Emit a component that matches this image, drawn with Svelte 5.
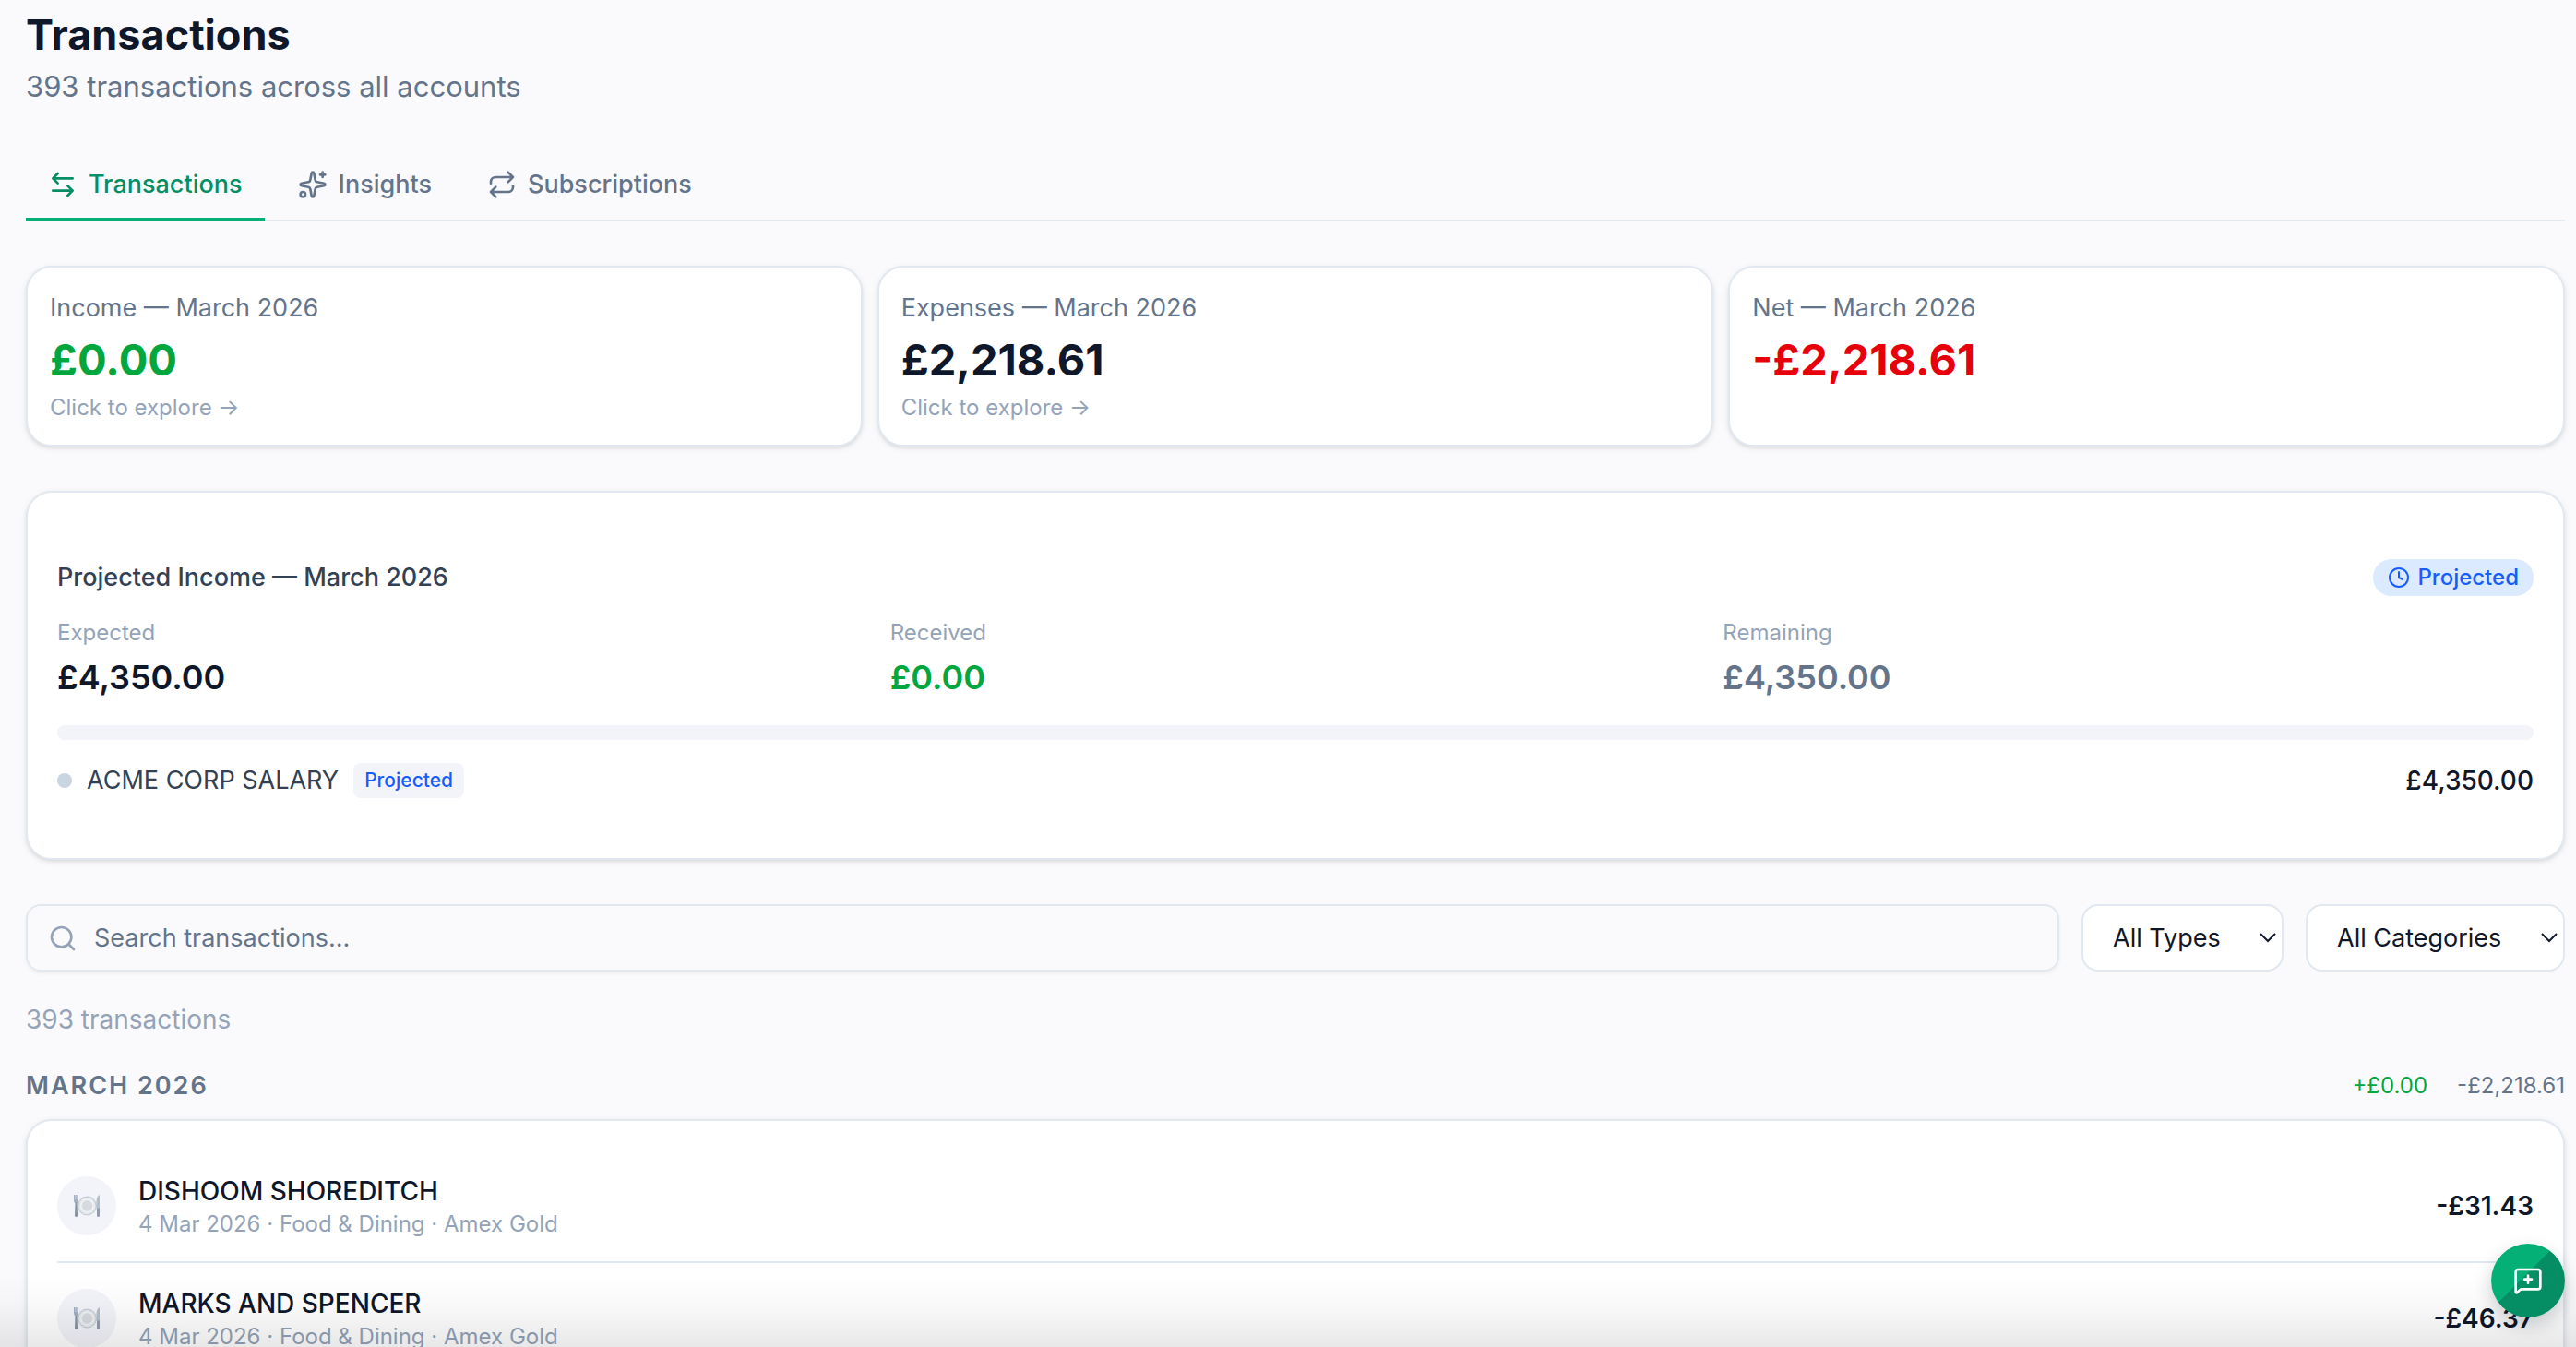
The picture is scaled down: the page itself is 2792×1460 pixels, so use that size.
<script lang="ts">
  type Tab = { id: string; label: string }
  type Summary = { label: string; value: string; tone: string; explore: boolean }

  const tabs: Tab[] = [
    { id: 'transactions', label: 'Transactions' },
    { id: 'insights', label: 'Insights' },
    { id: 'subscriptions', label: 'Subscriptions' }
  ]

  const summaries: Summary[] = [
    { label: 'Income — March 2026', value: '£0.00', tone: 'positive', explore: true },
    { label: 'Expenses — March 2026', value: '£2,218.61', tone: 'strong', explore: true },
    { label: 'Net — March 2026', value: '-£2,218.61', tone: 'negative', explore: false }
  ]

  const projection = [
    { label: 'Expected', value: '£4,350.00', tone: 'strong' },
    { label: 'Received', value: '£0.00', tone: 'positive' },
    { label: 'Remaining', value: '£4,350.00', tone: 'muted' }
  ]

  const transactions = [
    { name: 'DISHOOM SHOREDITCH', meta: '4 Mar 2026 · Food & Dining · Amex Gold', amount: '-£31.43' },
    { name: 'MARKS AND SPENCER', meta: '4 Mar 2026 · Food & Dining · Amex Gold', amount: '-£46.37' }
  ]

  let activeTab = $state('transactions')
  let search = $state('')
  let type = $state('all')
  let category = $state('all')
</script>

{#snippet chevron()}
  <svg class="chevron" viewBox="0 0 20 12" aria-hidden="true"><path d="m2 2 8 8 8-8" /></svg>
{/snippet}

<main class="page">
  <header>
    <h1>Transactions</h1>
    <p class="subtitle">393 transactions across all accounts</p>
  </header>

  <nav class="tabs" aria-label="Views">
    {#each tabs as tab}
      <button class="tab" class:active={activeTab === tab.id} onclick={() => (activeTab = tab.id)}>
        <svg class="icon" viewBox="0 0 24 24" aria-hidden="true">
          {#if tab.id === 'transactions'}
            <path d="M8 3 4 7l4 4M4 7h16M16 21l4-4-4-4M20 17H4" />
          {:else if tab.id === 'insights'}
            <path d="M11.017 2.814a1 1 0 0 1 1.966 0l1.051 5.558a2 2 0 0 0 1.594 1.594l5.558 1.051a1 1 0 0 1 0 1.966l-5.558 1.051a2 2 0 0 0-1.594 1.594l-1.051 5.558a1 1 0 0 1-1.966 0l-1.051-5.558a2 2 0 0 0-1.594-1.594l-5.558-1.051a1 1 0 0 1 0-1.966l5.558-1.051a2 2 0 0 0 1.594-1.594zM20 2v4M22 4h-4" />
            <circle cx="4" cy="20" r="2" />
          {:else}
            <path d="m17 2 4 4-4 4M3 11v-1a4 4 0 0 1 4-4h14M7 22l-4-4 4-4M21 13v1a4 4 0 0 1-4 4H3" />
          {/if}
        </svg>
        {tab.label}
      </button>
    {/each}
  </nav>

  <section class="summaries" aria-label="Summary">
    {#each summaries as item}
      <svelte:element this={item.explore ? 'button' : 'div'} class="card summary">
        <span class="summary-label">{item.label}</span>
        <span class="summary-value {item.tone}">{item.value}</span>
        {#if item.explore}
          <span class="explore">Click to explore →</span>
        {/if}
      </svelte:element>
    {/each}
  </section>

  <section class="card projected">
    <div class="projected-header">
      <h2>Projected Income — March 2026</h2>
      <span class="badge">
        <svg class="icon small" viewBox="0 0 24 24" aria-hidden="true">
          <circle cx="12" cy="12" r="10" />
          <path d="M12 6v6l4 2" />
        </svg>
        Projected
      </span>
    </div>

    <dl class="stats">
      {#each projection as stat}
        <div>
          <dt>{stat.label}</dt>
          <dd class={stat.tone}>{stat.value}</dd>
        </div>
      {/each}
    </dl>

    <div class="track"></div>

    <div class="source">
      <span class="dot"></span>
      <span class="source-name">ACME CORP SALARY</span>
      <span class="chip">Projected</span>
      <span class="source-amount">£4,350.00</span>
    </div>
  </section>

  <div class="filters">
    <label class="search">
      <svg class="icon" viewBox="0 0 24 24" aria-hidden="true">
        <circle cx="11" cy="11" r="8" />
        <path d="m21 21-4.3-4.3" />
      </svg>
      <input type="text" placeholder="Search transactions..." aria-label="Search transactions" bind:value={search} />
    </label>
    <div class="select">
      <select aria-label="Type" bind:value={type}>
        <option value="all">All Types</option>
      </select>
      {@render chevron()}
    </div>
    <div class="select">
      <select aria-label="Category" bind:value={category}>
        <option value="all">All Categories</option>
      </select>
      {@render chevron()}
    </div>
  </div>

  <p class="count">393 transactions</p>

  <section>
    <div class="month">
      <h3>March 2026</h3>
      <span class="month-in">+£0.00</span>
      <span class="month-out">-£2,218.61</span>
    </div>

    <ul class="card list">
      {#each transactions as tx}
        <li>
          <span class="avatar">
            <svg viewBox="0 0 28 24" aria-hidden="true">
              <circle cx="14.5" cy="12" r="9.8" fill="#e6eaee" stroke="#c3cbd5" stroke-width="1.2" />
              <circle cx="14.5" cy="12" r="6.6" fill="#d6dbe0" stroke="#f4f6f8" stroke-width="1.2" />
              <path d="M0 0h5v6.500q0 2-1.500 2.500h-2Q0 8.500 0 6.500z" fill="#a3afbf" />
              <path d="M1.700 0v5M3.300 0v5" stroke="#dde3ea" stroke-width=".6" />
              <path d="M1.500 8.500h2l.5 14q0 1.500-1.500 1.500T1 22.500z" fill="#8593a8" />
              <path d="M28 0q-3.500 1.500-3.500 8v7H28z" fill="#b4bfcb" />
              <path d="M25 14.500h3v8q0 1.500-1.500 1.500T25 22.500z" fill="#8f9db0" />
            </svg>
          </span>
          <div class="tx-text">
            <p class="tx-name">{tx.name}</p>
            <p class="tx-meta">{tx.meta}</p>
          </div>
          <span class="tx-amount">{tx.amount}</span>
        </li>
      {/each}
    </ul>
  </section>
</main>

<div class="fade"></div>

<button class="fab" aria-label="Send feedback">
  <svg class="icon" viewBox="0 0 24 24" aria-hidden="true">
    <path d="M22 17a2 2 0 0 1-2 2H6.828a2 2 0 0 0-1.414.586l-2.202 2.202A.71.71 0 0 1 2 21.286V5a2 2 0 0 1 2-2h16a2 2 0 0 1 2 2zM12 8v6M9 11h6" />
  </svg>
</button>

<style>
  :global(body) {
    background: #fafafc;
    overflow: hidden;
  }

  .page,
  button,
  input,
  select {
    font-family: Inter, 'Liberation Sans', sans-serif;
  }

  .page {
    padding: 6px 12px 0 28px;
    height: 100vh;
    box-sizing: border-box;
    overflow: hidden;
    color: #0f172a;
    font-size: 28px;
    line-height: 40px;
  }

  h1,
  h2,
  h3,
  p,
  dl,
  dd,
  ul {
    margin: 0;
    padding: 0;
  }

  h1 {
    font-size: 45px;
    font-weight: 700;
    line-height: 64px;
  }

  .subtitle {
    color: #64748b;
    font-size: 31px;
    line-height: 48px;
  }

  .icon {
    flex: none;
    width: 32px;
    height: 32px;
    fill: none;
    stroke: currentColor;
    stroke-width: 2;
    stroke-linecap: round;
    stroke-linejoin: round;
  }

  .small {
    width: 24px;
    height: 24px;
  }

  .tabs {
    display: flex;
    gap: 12px;
    margin-top: 42px;
    box-shadow: inset 0 -2px #e2e8f0;
  }

  .tab {
    display: flex;
    align-items: center;
    gap: 12px;
    padding: 24px 24px 20px;
    border: 0;
    border-bottom: 4px solid transparent;
    background: none;
    color: #64748b;
    font-size: 27px;
    font-weight: 500;
    line-height: 32px;
  }

  .tab.active {
    border-color: #05b076;
    color: #058d63;
  }

  .card {
    box-sizing: border-box;
    border: 2px solid #e2e8f0;
    border-radius: 28px;
    background: #fff;
    box-shadow: 0 2px 6px rgb(0 0 0 / 10%), 0 2px 4px -2px rgb(0 0 0 / 10%);
  }

  .positive {
    color: #00a63e;
  }

  .negative {
    color: #e7000b;
  }

  .strong {
    color: #0f172a;
  }

  .muted {
    color: #64748b;
  }

  .summaries {
    display: grid;
    grid-template-columns: repeat(3, minmax(0, 1fr));
    gap: 16px;
    margin-top: 48px;
  }

  .summary {
    display: flex;
    flex-direction: column;
    gap: 4px;
    padding: 24px;
    text-align: left;
  }

  .summary-label {
    color: #64748b;
    font-size: 27px;
    line-height: 40px;
  }

  .summary-value {
    font-size: 47px;
    font-weight: 700;
    line-height: 64px;
  }

  .explore {
    color: #94a3b8;
    font-size: 24px;
    line-height: 32px;
  }

  .projected {
    display: flex;
    flex-direction: column;
    gap: 24px;
    margin-top: 48px;
    padding: 72px 32px 64px;
  }

  .projected-header {
    display: flex;
    align-items: center;
    justify-content: space-between;
  }

  h2 {
    color: #334155;
    font-size: 27px;
    font-weight: 500;
  }

  .badge {
    display: flex;
    align-items: center;
    gap: 8px;
    padding: 4px 16px;
    border-radius: 20px;
    background: #dbeafe;
    color: #155dfc;
    font-size: 24px;
    font-weight: 500;
    line-height: 32px;
  }

  .stats {
    display: grid;
    grid-template-columns: repeat(3, minmax(0, 1fr));
    gap: 24px;
  }

  dt {
    color: #94a3b8;
    font-size: 24px;
    line-height: 32px;
  }

  dd {
    padding-top: 4px;
    font-size: 36px;
    font-weight: 600;
    line-height: 56px;
  }

  .track {
    height: 16px;
    border-radius: 8px;
    background: #f3f4f9;
  }

  .source {
    display: flex;
    align-items: center;
    gap: 16px;
  }

  .dot {
    width: 16px;
    height: 16px;
    border-radius: 50%;
    background: #cad5e2;
  }

  .source-name {
    color: #334155;
    font-size: 27px;
  }

  .chip {
    padding: 4px 12px;
    border-radius: 8px;
    background: #f3f4f9;
    color: #155dfc;
    font-size: 21px;
    font-weight: 500;
    line-height: 30px;
  }

  .source-amount {
    margin-left: auto;
    font-weight: 500;
  }

  .filters {
    display: flex;
    gap: 24px;
    margin-top: 48px;
  }

  .search {
    display: flex;
    flex: 1;
    align-items: center;
    gap: 18px;
    padding: 0 22px;
    border: 2px solid #e2e8f0;
    border-radius: 16px;
    box-shadow: 0 2px 4px rgb(0 0 0 / 5%);
    color: #94a3b8;
  }

  input {
    flex: 1;
    min-width: 0;
    padding: 0;
    border: 0;
    outline: 0;
    background: none;
    color: #0f172a;
    font-size: 27px;
  }

  input::placeholder {
    color: #64748b;
    opacity: 1;
  }

  .select {
    position: relative;
  }

  select {
    height: 73px;
    padding: 0 66px 0 32px;
    border: 2px solid #e2e8f0;
    border-radius: 18px;
    appearance: none;
    background: #fff;
    color: #0f172a;
    font-size: 27px;
  }

  .chevron {
    position: absolute;
    top: 30px;
    right: 7px;
    width: 20px;
    height: 12px;
    fill: none;
    stroke: #0f172a;
    stroke-width: 2;
    pointer-events: none;
  }

  .count {
    margin-top: 32px;
    color: #94a3b8;
  }

  .month {
    display: flex;
    align-items: center;
    gap: 32px;
    margin: 32px 0 16px;
    font-size: 24px;
  }

  h3 {
    margin-right: auto;
    color: #64748b;
    font-size: 27px;
    font-weight: 600;
    letter-spacing: 2px;
    text-transform: uppercase;
  }

  .month-in {
    color: #00a63e;
  }

  .month-out {
    color: #64748b;
  }

  .list {
    padding: 32px;
    list-style: none;
  }

  li {
    display: flex;
    align-items: center;
    gap: 24px;
    padding: 24px 0;
  }

  li + li {
    border-top: 2px solid #e2e8f0;
  }

  .avatar {
    display: flex;
    align-items: center;
    justify-content: center;
    width: 64px;
    height: 64px;
    border-radius: 50%;
    background: #f3f4f9;
  }

  .avatar svg {
    width: 28px;
    height: 24px;
  }

  .tx-text {
    flex: 1;
  }

  .tx-name {
    font-weight: 500;
  }

  .tx-meta {
    color: #94a3b8;
    font-size: 24px;
    line-height: 32px;
  }

  .tx-amount {
    font-weight: 600;
  }

  .fade {
    position: fixed;
    inset: auto 0 0;
    height: 80px;
    background: linear-gradient(rgb(0 0 0 / 0%), rgb(0 0 0 / 2%) 40%, rgb(0 0 0 / 9%));
    pointer-events: none;
  }

  .fab {
    position: fixed;
    right: 12px;
    bottom: 32px;
    display: flex;
    align-items: center;
    justify-content: center;
    width: 80px;
    height: 80px;
    padding: 0;
    border: 0;
    border-radius: 50%;
    background: linear-gradient(135deg, #05b076 45%, #058d63 45%);
    box-shadow: 0 8px 20px rgb(15 23 42 / 20%);
    color: #fff;
  }
</style>
